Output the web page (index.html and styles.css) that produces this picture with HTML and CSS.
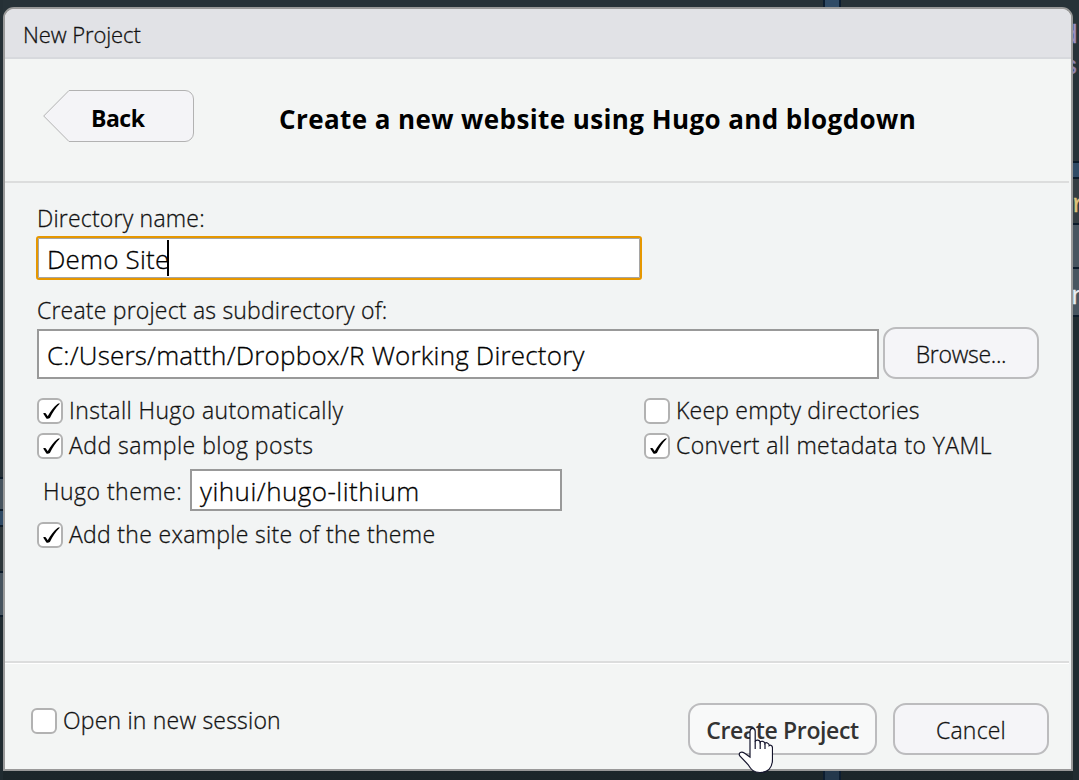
FILE: index.html
```
<!DOCTYPE html>
<html lang="en">
<head>
<meta charset="utf-8">
<title>New Project</title>
<link rel="stylesheet" href="styles.css">
</head>
<body>
<div class="desktop">
  <div class="splitter splitter-top"></div>
  <div class="splitter splitter-bottom"></div>
  <div class="edge edge-left"></div>
  <div class="edge edge-right">
    <span class="code code-a">d</span>
    <span class="code code-b">s</span>
    <span class="code code-c">r</span>
    <span class="code code-d">n</span>
  </div>
  <main class="dialog">
    <div class="titlebar"><span class="t-title">New Project</span></div>
    <header class="header">
      <button class="back">
        <svg class="back-shape" width="152" height="52" viewBox="0 0 152 52"><path d="M26 .5H142a8.500 8.500 0 0 1 8.500 8.500V43a8.500 8.500 0 0 1-8.500 8.500H26L.7 26Z" fill="#f4f4f7" stroke="#b2b2b2"/></svg>
        <span class="back-label">Back</span>
      </button>
      <h1 class="heading"><span class="t-heading">Create a new website using Hugo and blogdown</span></h1>
    </header>
    <section class="body">
      <label class="label label-dir"><span class="t-dir">Directory name:</span></label>
      <div class="input input-focus"><span class="t-demo">Demo Site</span><i class="caret"></i></div>
      <label class="label label-sub"><span class="t-sub">Create project as subdirectory of:</span></label>
      <div class="path-row">
        <div class="input input-path"><span class="t-path">C:/Users/matth/Dropbox/R Working Directory</span></div>
        <button class="button browse"><span class="t-browse">Browse...</span></button>
      </div>
      <div class="options">
        <div class="column">
          <div class="check"><span class="box"><svg viewBox="0 0 26 26"><path class="tick" d="M6.200 15.500c1.200-.9 2.600-.5 3.200.7l1.300 2C13.400 13.200 16.600 9 20.500 5.900c.8-.5 1.800-.5 2.500-.4C18.600 9.800 15.600 14.700 12.900 19.900c-1.300.9-2.700 1-3.500.5Z"/></svg></span><span class="t-install">Install Hugo automatically</span></div>
          <div class="check"><span class="box"><svg viewBox="0 0 26 26"><path class="tick" d="M6.200 15.500c1.200-.9 2.600-.5 3.200.7l1.300 2C13.400 13.200 16.600 9 20.500 5.900c.8-.5 1.800-.5 2.500-.4C18.600 9.800 15.600 14.700 12.900 19.900c-1.300.9-2.700 1-3.500.5Z"/></svg></span><span class="t-sample">Add sample blog posts</span></div>
        </div>
        <div class="column">
          <div class="check"><span class="box"></span><span class="t-keep">Keep empty directories</span></div>
          <div class="check"><span class="box"><svg viewBox="0 0 26 26"><path class="tick" d="M6.200 15.500c1.200-.9 2.600-.5 3.200.7l1.300 2C13.400 13.200 16.600 9 20.500 5.900c.8-.5 1.800-.5 2.500-.4C18.600 9.800 15.600 14.700 12.900 19.900c-1.300.9-2.700 1-3.500.5Z"/></svg></span><span class="t-yaml">Convert all metadata to YAML</span></div>
        </div>
      </div>
      <div class="theme-row">
        <label class="theme-label"><span class="t-theme">Hugo theme:</span></label>
        <div class="input input-theme"><span class="t-lithium">yihui/hugo-lithium</span></div>
      </div>
      <div class="check"><span class="box"><svg viewBox="0 0 26 26"><path class="tick" d="M6.200 15.500c1.200-.9 2.600-.5 3.200.7l1.300 2C13.400 13.200 16.600 9 20.500 5.900c.8-.5 1.800-.5 2.500-.4C18.600 9.800 15.600 14.700 12.900 19.900c-1.300.9-2.700 1-3.500.5Z"/></svg></span><span class="t-example">Add the example site of the theme</span></div>
    </section>
    <footer class="footer">
      <div class="check session"><span class="box"></span><span class="t-session">Open in new session</span></div>
      <button class="button create"><span class="t-create">Create Project</span></button>
      <button class="button cancel"><span class="t-cancel">Cancel</span></button>
    </footer>
  </main>
  <svg class="pointer" width="35" height="47" viewBox="0 0 35 47"><path d="M12 30V4.500c0-4.200 5.200-4.200 5.200 0V14.500c.8-2 4.500-1.700 5 .8.900-1.800 4.400-1.200 4.700 1.200 1-1.500 4.300-.7 4.300 2.100 1.200-1 3.300 0 3.300 2.400V32c0 8-4.200 13.500-12.500 13.500-6.500 0-9-3-12-8L1.800 29c-1.800-3.300 1.600-5 4.500-3Z" fill="#fff" stroke="#15152d" stroke-width="1.200"/><path d="M17.200 14v8M22.200 15v7M27 16.500V22" fill="none" stroke="#15152d" stroke-width="1.200"/></svg>
</div>
</body>
</html>
```
FILE: styles.css
```
* { box-sizing: border-box; }
body { margin: 0; font-family: "Open Sans", "Noto Sans", sans-serif; font-weight: 300; color: #111; -webkit-text-stroke: .3px; }
.desktop { position: relative; width: 1079px; height: 780px; overflow: hidden; padding: 7px 6px 9px 3px; background: linear-gradient(#273238, #253036 50%, #1c262a); }
.splitter { position: absolute; left: 823px; width: 18px; border: solid #0c1d30; border-width: 0 2px; background: #304b66; }
.splitter-top { top: 0; height: 7px; }
.splitter-bottom { bottom: 0; height: 9px; background: #24384c; }
.edge { position: absolute; top: 0; height: 780px; }
.edge-left { left: 0; width: 3px; background: linear-gradient(#253036 477px, #0b1a29 477px 479px, #46535e 479px 509px, #0b1a29 509px 511px, #2e4964 511px 525px, #0b1a29 525px 527px, #2d3639 527px 571px, #0b1a29 571px 573px, #46535e 573px 615px, #0b1a29 615px 617px, #202b30 617px); }
.edge-right { right: 0; width: 6px; overflow: hidden; background: linear-gradient(#273238 161px, #0b1a29 161px 163px, #304b66 163px 177px, #0b1a29 177px 179px, #343d42 179px 223px, #0b1a29 223px 225px, #485560 225px 267px, #0b1a29 267px 269px, #485560 269px 315px, #0b1a29 315px 317px, #202b30 317px); }
.code { position: absolute; font: 26px/30px "Liberation Mono", monospace; }
.code-a { top: 21px; right: 1px; color: #9c8fc0; }
.code-b { top: 52px; right: 1px; color: #9184b2; }
.code-c { top: 190px; left: -2px; color: #ddc27b; }
.code-d { top: 282px; left: -2px; color: #e8edf2; }
.dialog { position: relative; display: flex; flex-direction: column; width: 1070px; height: 764px; border: 2px solid #999; border-radius: 11px 11px 0 0; background: #f2f4f4; overflow: hidden; }
.titlebar { height: 50px; flex: none; padding-left: 18px; line-height: 51px; font-size: 22px; background: #e1e2e6; border-bottom: 2px solid #d7d9dd; }
.header { display: flex; flex: none; height: 122px; padding: 31px 0 0 38px; background: #f3f5f4; }
button { margin: 0; padding: 0; border: 0; background: none; color: inherit; font: inherit; }
.back { position: relative; display: flex; width: 152px; height: 52px; }
.back-shape { position: absolute; inset: 0; }
.back-label { position: relative; margin-left: 48px; font-size: 23px; font-weight: 700; line-height: 57px; letter-spacing: -.5px; color: #000; }
.heading { margin: 0 0 0 84px; font-size: 26px; line-height: 59px; letter-spacing: .41px; color: #000; }
.heading, .back-label, .create { -webkit-text-stroke: 0; }
.heading, .label, .check, .input, .titlebar, .theme-label, .button, .back-label { white-space: nowrap; }
.body { flex: none; height: 480px; padding: 18px 30px 0 32px; margin-right: 2px; border-top: 2px solid #dcdddd; background: #f2f4f4; }
.label { display: block; height: 35px; line-height: 34px; font-size: 23px; }
.label-sub { margin-top: 13px; height: 34px; }
.input { display: flex; border: 2px solid #999; background: #fff; color: #000; padding-left: 8px; font-size: 26px; }
.input-focus { width: 606px; height: 44px; margin-left: -1px; padding-left: 9px; border: 2px solid #e69700; border-radius: 3px; line-height: 43px; box-shadow: inset 0 0 0 1px #a5a5a5; }
.caret { width: 2px; height: 36px; margin: 2px 0 0 -2px; background: #000; }
.path-row { display: flex; gap: 4px; }
.input-path { width: 842px; height: 50px; line-height: 49px; margin-top: 2px; }
.button { border: 2px solid #bcbcbe; border-radius: 13px; background: #f5f5f8; height: 52px; font-size: 23px; line-height: 50px; text-align: center; }
.browse { width: 156px; }
.options { display: flex; margin-top: 14px; }
.column { flex: none; width: 607px; }
.column:last-child { width: auto; }
.check { display: flex; align-items: center; gap: 6px; height: 35px; font-size: 23px; line-height: 33px; }
.box { width: 26px; height: 26px; flex: none; border: 2px solid #b2b2b2; border-radius: 6px; background: #fff; }
.box svg { display: block; width: 26px; height: 26px; margin: -2px; }
.tick { fill: #000; }
.theme-row { display: flex; height: 54px; padding: 6px 0 0 6px; }
.theme-label { width: 147px; line-height: 44px; font-size: 23px; }
.input-theme { width: 372px; height: 42px; line-height: 41px; }
.footer { display: flex; flex: 1; padding: 40px 0 0 26px; margin-right: 2px; border-top: 2px solid #dcdddd; box-shadow: inset 0 1px #fff; background: #f3f5f4; }
.session { width: 657px; }
.create { width: 189px; background: #f8f9f9; color: #333; font-weight: 600; }
.cancel { width: 156px; margin-left: 16px; }
.t-title { letter-spacing: -.1px; }
.t-dir, .t-demo, .t-sub, .t-path, .t-keep, .t-session, .t-cancel { letter-spacing: .2px; }
.t-install, .t-yaml { letter-spacing: .39px; }
.t-sample, .t-theme, .t-lithium { letter-spacing: .48px; }
.t-example { letter-spacing: .3px; }
.t-browse { letter-spacing: -.3px; }
.t-create { letter-spacing: -.37px; }
.pointer { position: absolute; left: 738px; top: 727px; }
```
